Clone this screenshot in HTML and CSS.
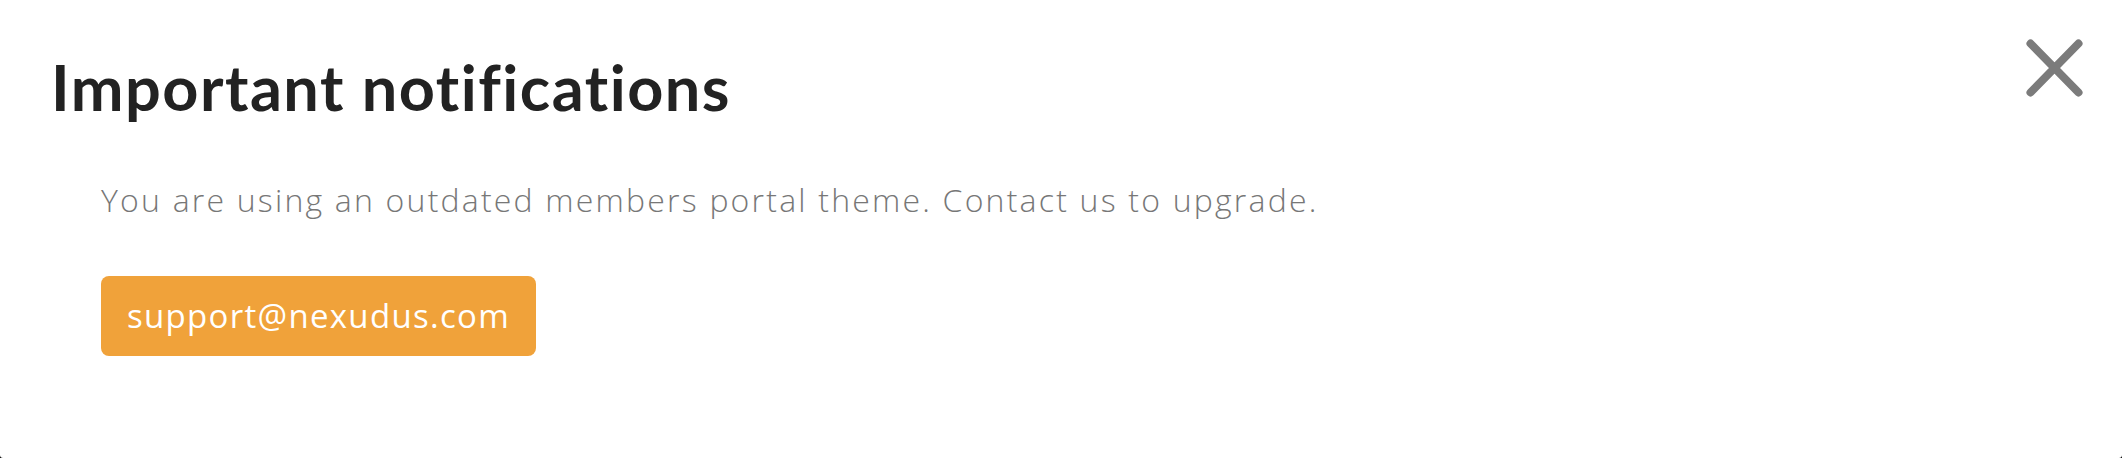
FILE: index.html
```html
<!DOCTYPE html>
<html lang="en">
<head>
<meta charset="utf-8">
<title>Important notifications</title>
<link rel="stylesheet" href="styles.css">
</head>
<body>
<div class="dialog">
  <div class="dialog-header">
    <h1 class="dialog-title">Important notifications</h1>
    <button class="close-btn" aria-label="Close">
      <svg width="57" height="58" viewBox="0 0 57 58">
        <path d="M4.5 4.5 L52.5 53.5 M52.5 4.5 L4.5 53.5" stroke="#7b7b7b" stroke-width="8" stroke-linecap="round" fill="none"/>
      </svg>
    </button>
  </div>
  <div class="dialog-body">
    <p class="notice">You are using an outdated members portal theme. Contact us to upgrade.</p>
    <a class="support-btn" href="#">support@nexudus.com</a>
  </div>
</div>
</body>
</html>
```
FILE: styles.css
```css
html, body {
  margin: 0;
  padding: 0;
  background: #000;
}
.dialog {
  box-sizing: border-box;
  width: 2122px;
  height: 458px;
  background: #fff;
  border-radius: 0 0 3px 3px;
  padding: 39px 39px 0 51px;
  font-family: Lato, "Noto Sans", sans-serif;
  font-variant-ligatures: none;
}
.dialog-header {
  display: flex;
  justify-content: space-between;
  align-items: flex-start;
}
.dialog-title {
  margin: 10px 0 0 0;
  font-size: 63px;
  line-height: 1.2;
  font-weight: 700;
  letter-spacing: 1.5px;
  color: #222;
}
.close-btn {
  border: 0;
  background: none;
  padding: 0;
  margin: 0;
  width: 57px;
  height: 58px;
  display: block;
  cursor: pointer;
}
.close-btn svg { display: block; }
.dialog-body {
  padding-left: 50px;
}
.notice {
  margin: 53px 0 0 0;
  font-family: "Open Sans", Lato, sans-serif;
  font-size: 32px;
  line-height: 1.36;
  font-weight: 300;
  letter-spacing: 2.2px;
  color: #777;
}
.support-btn {
  display: inline-block;
  margin-top: 55px;
  height: 80px;
  line-height: 80px;
  padding: 0 26px;
  background: #f0a23a;
  color: #fff;
  font-family: "Open Sans", Lato, sans-serif;
  font-size: 33px;
  font-weight: 500;
  letter-spacing: 1.3px;
  border-radius: 8px;
  text-decoration: none;
}
```
